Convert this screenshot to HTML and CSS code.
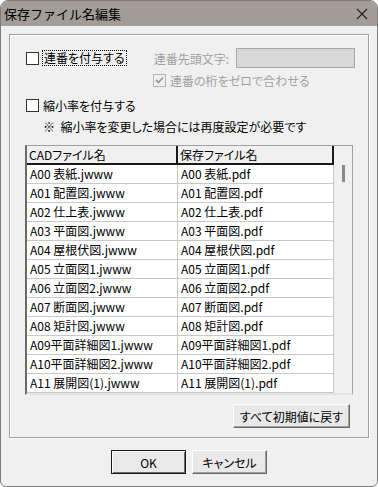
FILE: index.html
```html
<!DOCTYPE html>
<html lang="ja">
<head>
  <meta charset="UTF-8" />
  <title>保存ファイル名編集</title>
  <link rel="stylesheet" href="styles.css">
</head>
<body>
  <div class="dialog">
    <div class="titlebar">
      <span class="title">保存ファイル名編集</span>
      <svg class="close" width="12" height="12" viewBox="0 0 12 12"><path d="M1 1L11 11M11 1L1 11" stroke="#1e1e1e" stroke-width="1.1" fill="none"/></svg>
    </div>
    <div class="body">
      <div class="groupbox">
        <div class="row row-serial">
          <label class="check"><span class="box"></span><span class="focus">連番を付与する</span></label>
          <span class="prefix-label">連番先頭文字:</span>
          <span class="textbox"></span>
        </div>
        <div class="row row-zero">
          <label class="check disabled"><span class="box"><svg width="11" height="11" viewBox="0 0 11 11"><path d="M2 5L4.5 7.5L9 2.5" stroke="#9a9a9a" stroke-width="1.8" fill="none"/></svg></span>連番の桁をゼロで合わせる</label>
        </div>
        <div class="row row-scale">
          <label class="check"><span class="box"></span>縮小率を付与する</label>
        </div>
        <p class="note">※&nbsp; 縮小率を変更した場合には再度設定が必要です</p>
        <div class="grid">
          <div class="table">
            <div class="hdr">CADファイル名</div><div class="hdr hdr-last">保存ファイル名</div>
            <div class="cell">A00 表紙.jwww</div><div class="cell">A00 表紙.pdf</div>
            <div class="cell">A01 配置図.jwww</div><div class="cell">A01 配置図.pdf</div>
            <div class="cell">A02 仕上表.jwww</div><div class="cell">A02 仕上表.pdf</div>
            <div class="cell">A03 平面図.jwww</div><div class="cell">A03 平面図.pdf</div>
            <div class="cell">A04 屋根伏図.jwww</div><div class="cell">A04 屋根伏図.pdf</div>
            <div class="cell">A05 立面図1.jwww</div><div class="cell">A05 立面図1.pdf</div>
            <div class="cell">A06 立面図2.jwww</div><div class="cell">A06 立面図2.pdf</div>
            <div class="cell">A07 断面図.jwww</div><div class="cell">A07 断面図.pdf</div>
            <div class="cell">A08 矩計図.jwww</div><div class="cell">A08 矩計図.pdf</div>
            <div class="cell">A09平面詳細図1.jwww</div><div class="cell">A09平面詳細図1.pdf</div>
            <div class="cell">A10平面詳細図2.jwww</div><div class="cell">A10平面詳細図2.pdf</div>
            <div class="cell">A11 展開図(1).jwww</div><div class="cell">A11 展開図(1).pdf</div>
          </div>
          <div class="vscroll"><span class="thumb"></span></div>
        </div>
        <div class="reset-row"><button class="btn btn-reset">すべて初期値に戻す</button></div>
      </div>
      <div class="footer">
        <button class="btn btn-default">OK</button>
        <button class="btn">キャンセル</button>
      </div>
    </div>
  </div>
</body>
</html>
```

FILE: styles.css
```css
* { box-sizing: border-box; }
body { margin: 0; background: #fff; font-family: "Noto Sans CJK JP", sans-serif; font-size: 12px; color: #000; font-feature-settings: "palt"; }

.dialog { width: 378px; height: 487px; border: 1px solid #7d7d7d; border-radius: 8px 8px 6px 6px; overflow: hidden; background: #f0f0f0; display: flex; flex-direction: column; }
.titlebar { height: 25px; background: #a29d98; display: flex; align-items: center; justify-content: space-between; padding: 0 9px 0 3px; }
.title { font-size: 13px; font-feature-settings: normal; color: #000; }
.close { display: block; }

.body { padding: 8px 0 0 8px; }
.groupbox { width: 360px; height: 404px; border: 1px solid #a0a0a0; box-shadow: 1px 1px 0 #fff, inset 1px 1px 0 #fff; padding: 13px 0 0 16px; }

.row { display: flex; align-items: center; }
.row-serial { height: 20px; }
.row-zero { height: 15px; margin-top: 5px; padding-left: 127px; }
.row-scale { height: 15px; margin-top: 10px; }

.check { display: flex; align-items: center; gap: 4px; line-height: 15px; }
.check .box { width: 13px; height: 13px; background: #fff; border: 1px solid #333; display: flex; align-items: center; justify-content: center; }
.check .focus { border: 1px dotted #000; padding: 0 1px; margin-left: -1px; line-height: 14px; }
.check.disabled { color: #a0a0a0; }
.check.disabled .box { background: #f0f0f0; border-color: #b5b5b5; }

.prefix-label { color: #a0a0a0; margin-left: 27px; width: 82px; }
.textbox { width: 119px; height: 20px; background: #d8d8d8; border: 1px solid #a8a8a8; }

.note { margin: 7px 0 0 17px; line-height: 14px; }

.grid { margin: 11px 0 0 -1px; width: 328px; height: 250px; display: flex; border-top: 1px solid #a0a0a0; border-left: 2px solid #6a6a6a; border-right: 1px solid #a0a0a0; border-bottom: 2px solid #e4e4e4; }
.table { display: grid; grid-template-columns: 151px 156px; grid-auto-rows: 19px; background: #fff; align-content: start; }
.hdr { background: #f0f0f0; border-right: 2px solid #1a1a1a; border-bottom: 2px solid #1a1a1a; padding: 1px 2px; line-height: 16px; white-space: nowrap; }
.cell { border-right: 1px solid #c8c8c8; border-bottom: 1px solid #c8c8c8; padding: 0 3px; line-height: 18px; white-space: nowrap; overflow: hidden; }
.vscroll { width: 18px; background: #f0f0f0; position: relative; }
.thumb { position: absolute; left: 8px; top: 19px; width: 3px; height: 17px; background: #8a8a8a; }

.reset-row { display: flex; justify-content: flex-end; padding-right: 18px; margin-top: 9px; }

.btn { font-family: "Noto Sans CJK JP", sans-serif; font-size: 12px; font-feature-settings: "palt"; height: 24px; background: #e9e9e9; border: 1px solid #fff; border-right-color: #6a6a6a; border-bottom-color: #6a6a6a; box-shadow: inset -1px -1px 0 #a0a0a0; padding: 0; color: #000; }
.btn-reset { width: 117px; }
.footer { display: flex; justify-content: center; gap: 6px; margin-top: 12px; padding-right: 8px; }
.footer .btn { width: 75px; }
.btn-default { border: 1px solid #1a1a1a; box-shadow: inset 1px 1px 0 #fff, inset -1px -1px 0 #6a6a6a; }
```
